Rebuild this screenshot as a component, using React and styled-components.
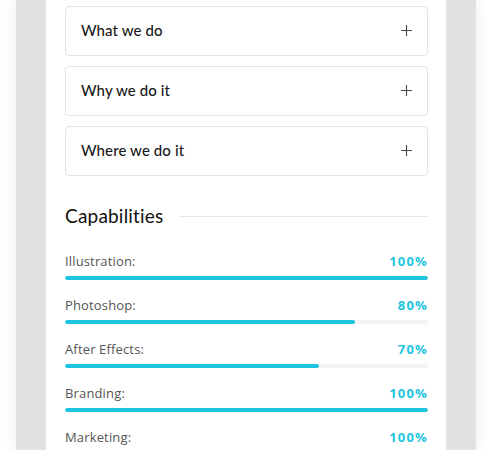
import React from "react";
import styled, { createGlobalStyle } from "styled-components";

const GlobalStyle = createGlobalStyle`
  html, body {
    margin: 0;
    padding: 0;
    background: #ffffff;
  }
  * {
    box-sizing: border-box;
  }
`;

const panels = ["What we do", "Why we do it", "Where we do it"];

const skills = [
  { name: "Illustration", value: 100 },
  { name: "Photoshop", value: 80 },
  { name: "After Effects", value: 70 },
  { name: "Branding", value: 100 },
  { name: "Marketing", value: 100 },
];

export default function App() {
  return (
    <>
      <GlobalStyle />
      <Page>
        <Frame>
          <Card>
            <Accordion>
              {panels.map((title) => (
                <Panel key={title}>
                  <PanelTitle>{title}</PanelTitle>
                  <PlusIcon />
                </Panel>
              ))}
            </Accordion>
            <Heading>
              <HeadingText>Capabilities</HeadingText>
              <HeadingLine />
            </Heading>
            <SkillList>
              {skills.map((skill) => (
                <Skill key={skill.name}>
                  <SkillHead>
                    <SkillName>{skill.name}:</SkillName>
                    <SkillValue>{skill.value}%</SkillValue>
                  </SkillHead>
                  <Track>
                    <Fill style={{ width: `${skill.value}%` }} />
                  </Track>
                </Skill>
              ))}
            </SkillList>
          </Card>
        </Frame>
      </Page>
    </>
  );
}

function PlusIcon() {
  return (
    <PlusSvg viewBox="0 0 11 11">
      <path d="M5.5 0v11M0 5.5h11" stroke="#4a4a4a" strokeWidth="1.1" fill="none" />
    </PlusSvg>
  );
}

const Page = styled.div`
  height: 450px;
  overflow: hidden;
  padding: 0 16px;
`;

const Frame = styled.div`
  height: 100%;
  background: #e2e2e2;
  padding: 0 30px;
  box-shadow: 0 0 16px rgba(0, 0, 0, 0.07);
`;

const Card = styled.div`
  height: 100%;
  background: #ffffff;
  padding: 6px 18px 0 19px;
`;

const Accordion = styled.div`
  display: flex;
  flex-direction: column;
  gap: 10px;
`;

const Panel = styled.div`
  height: 50px;
  border: 1px solid #e4e4e4;
  border-radius: 4px;
  display: flex;
  align-items: center;
  justify-content: space-between;
  padding: 0 15px 2px 15px;
`;

const PanelTitle = styled.span`
  font-family: Lato, "Noto Sans", sans-serif;
  font-size: 15px;
  font-weight: 500;
  letter-spacing: 0.1px;
  color: #1a1a1a;
`;

const PlusSvg = styled.svg`
  width: 11px;
  height: 11px;
  display: block;
`;

const Heading = styled.div`
  display: flex;
  align-items: center;
  gap: 15px;
  margin-top: 28px;
`;

const HeadingText = styled.h3`
  margin: 0;
  font-family: Lato, "Noto Sans", sans-serif;
  font-size: 19px;
  font-weight: 400;
  letter-spacing: 0.2px;
  color: #111;
  line-height: 24px;
`;

const HeadingLine = styled.div`
  flex: 1;
  height: 1px;
  background: #e6e6e6;
`;

const SkillList = styled.div`
  display: flex;
  flex-direction: column;
  gap: 17px;
  margin-top: 25px;
`;

const Skill = styled.div`
  display: flex;
  flex-direction: column;
  gap: 7px;
`;

const SkillHead = styled.div`
  display: flex;
  justify-content: space-between;
  align-items: center;
  line-height: 16px;
`;

const SkillName = styled.span`
  font-family: "Open Sans", "Noto Sans", sans-serif;
  font-size: 13px;
  letter-spacing: 0.15px;
  color: #555;
`;

const SkillValue = styled.span`
  font-family: "Open Sans", "Noto Sans", sans-serif;
  font-size: 13px;
  font-weight: 700;
  letter-spacing: 1.2px;
  color: #1ec5e0;
`;

const Track = styled.div`
  height: 4px;
  border-radius: 2px;
  background: #f3f3f3;
  overflow: hidden;
`;

const Fill = styled.div`
  height: 100%;
  border-radius: 2px;
  background: #1ec5e0;
`;
